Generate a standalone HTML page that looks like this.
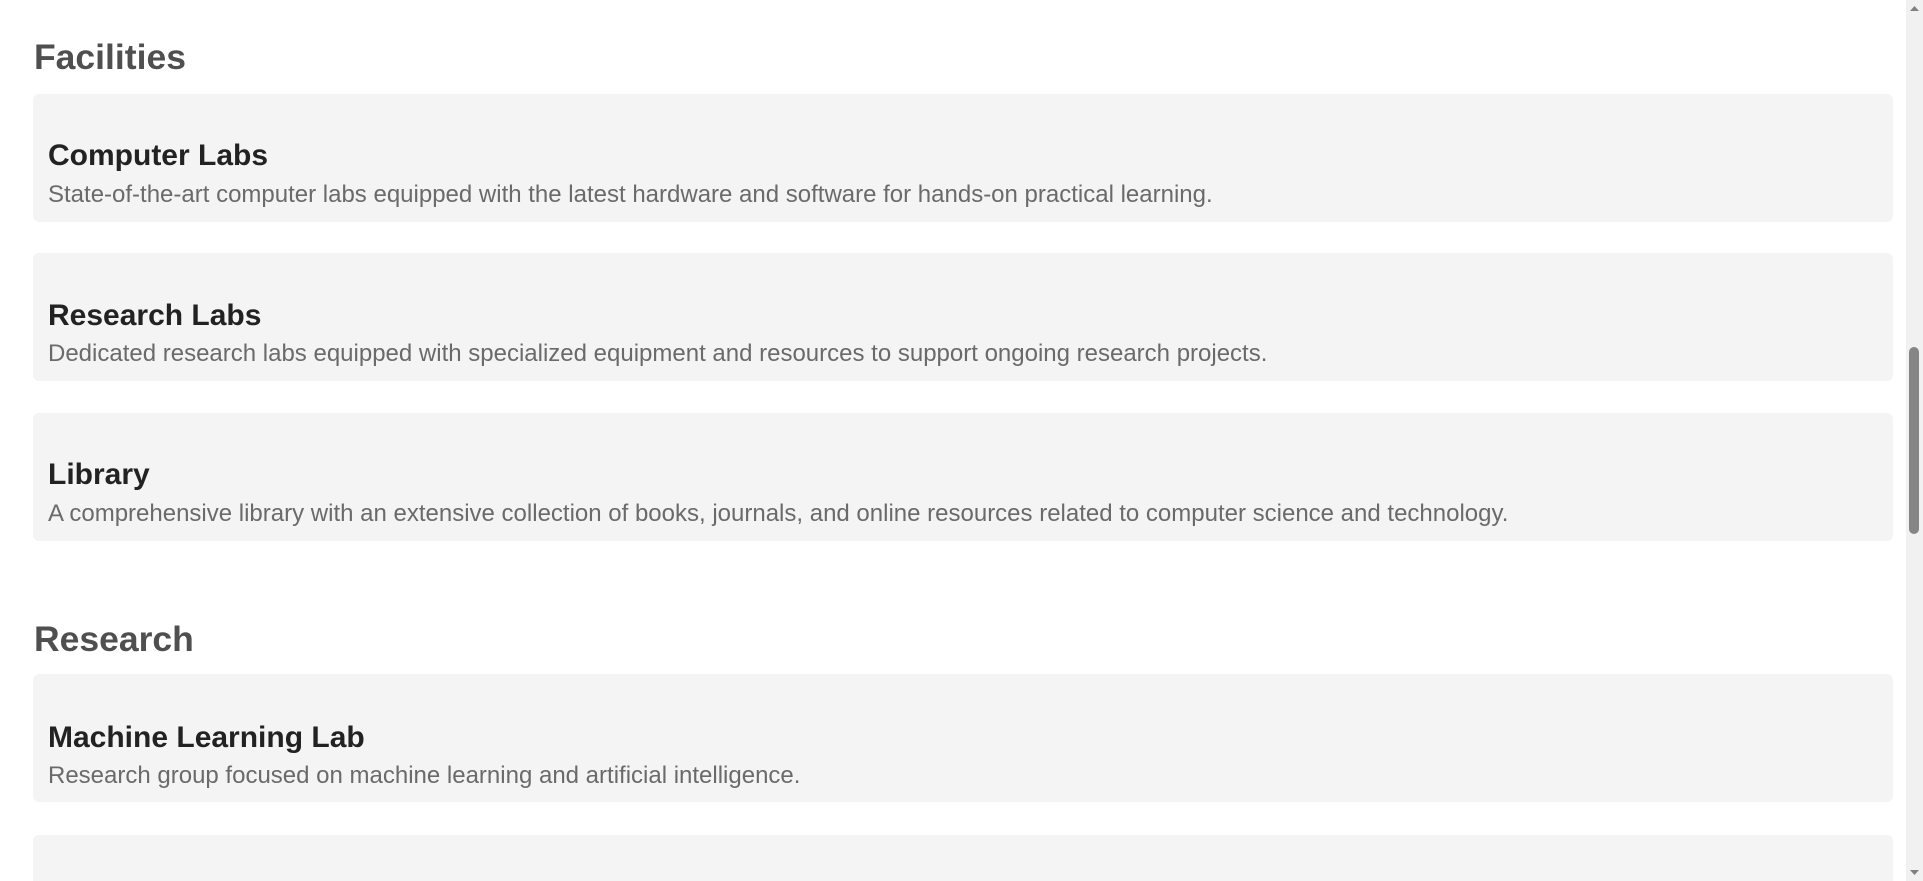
<!DOCTYPE html>
<html><head><meta charset="utf-8"><style>
html,body{margin:0;padding:0;width:1923px;height:881px;overflow:hidden;background:#fff;font-family:"Liberation Sans",Arial,sans-serif;position:relative}
.h{position:absolute;left:34px;font-size:35.5px;font-weight:bold;color:#4f4f4f;line-height:40px;margin:0}
.c{position:absolute;left:33px;width:1860px;height:128px;background:#f4f4f4;border-radius:6px}
.t{position:absolute;left:48px;font-size:30px;font-weight:bold;color:#222;line-height:34px;white-space:nowrap}
.d{position:absolute;left:48px;font-size:24px;color:#6a6a6a;line-height:26px;white-space:nowrap}
.sb{position:absolute;left:1906px;top:0;width:17px;height:881px;background:#f1f1f1}
.th{position:absolute;left:1909px;top:347px;width:10px;height:187px;background:#858585;border-radius:5px}
</style></head><body>
<div class="h" style="top:37px">Facilities</div>
<div class="c" style="top:94px"></div>
<div class="t" style="top:139px">Computer Labs</div>
<div class="d" style="top:182px">State-of-the-art computer labs equipped with the latest hardware and software for hands-on practical learning.</div>
<div class="c" style="top:253px"></div>
<div class="t" style="top:299px">Research Labs</div>
<div class="d" style="top:341px">Dedicated research labs equipped with specialized equipment and resources to support ongoing research projects.</div>
<div class="c" style="top:413px"></div>
<div class="t" style="top:458px">Library</div>
<div class="d" style="top:501px">A comprehensive library with an extensive collection of books, journals, and online resources related to computer science and technology.</div>
<div class="h" style="top:619px">Research</div>
<div class="c" style="top:674px"></div>
<div class="t" style="top:721px">Machine Learning Lab</div>
<div class="d" style="top:763px">Research group focused on machine learning and artificial intelligence.</div>
<div class="c" style="top:835px;height:46px;border-radius:6px 6px 0 0"></div>
<div class="sb"></div>
<div class="th"></div>
<svg style="position:absolute;left:1906px;top:0" width="17" height="17"><path d="M4 11 L8.5 6 L13 11Z" fill="#808080"/></svg>
<svg style="position:absolute;left:1906px;top:864px" width="17" height="17"><path d="M4 6 L8.5 11 L13 6Z" fill="#808080"/></svg>
</body></html>
